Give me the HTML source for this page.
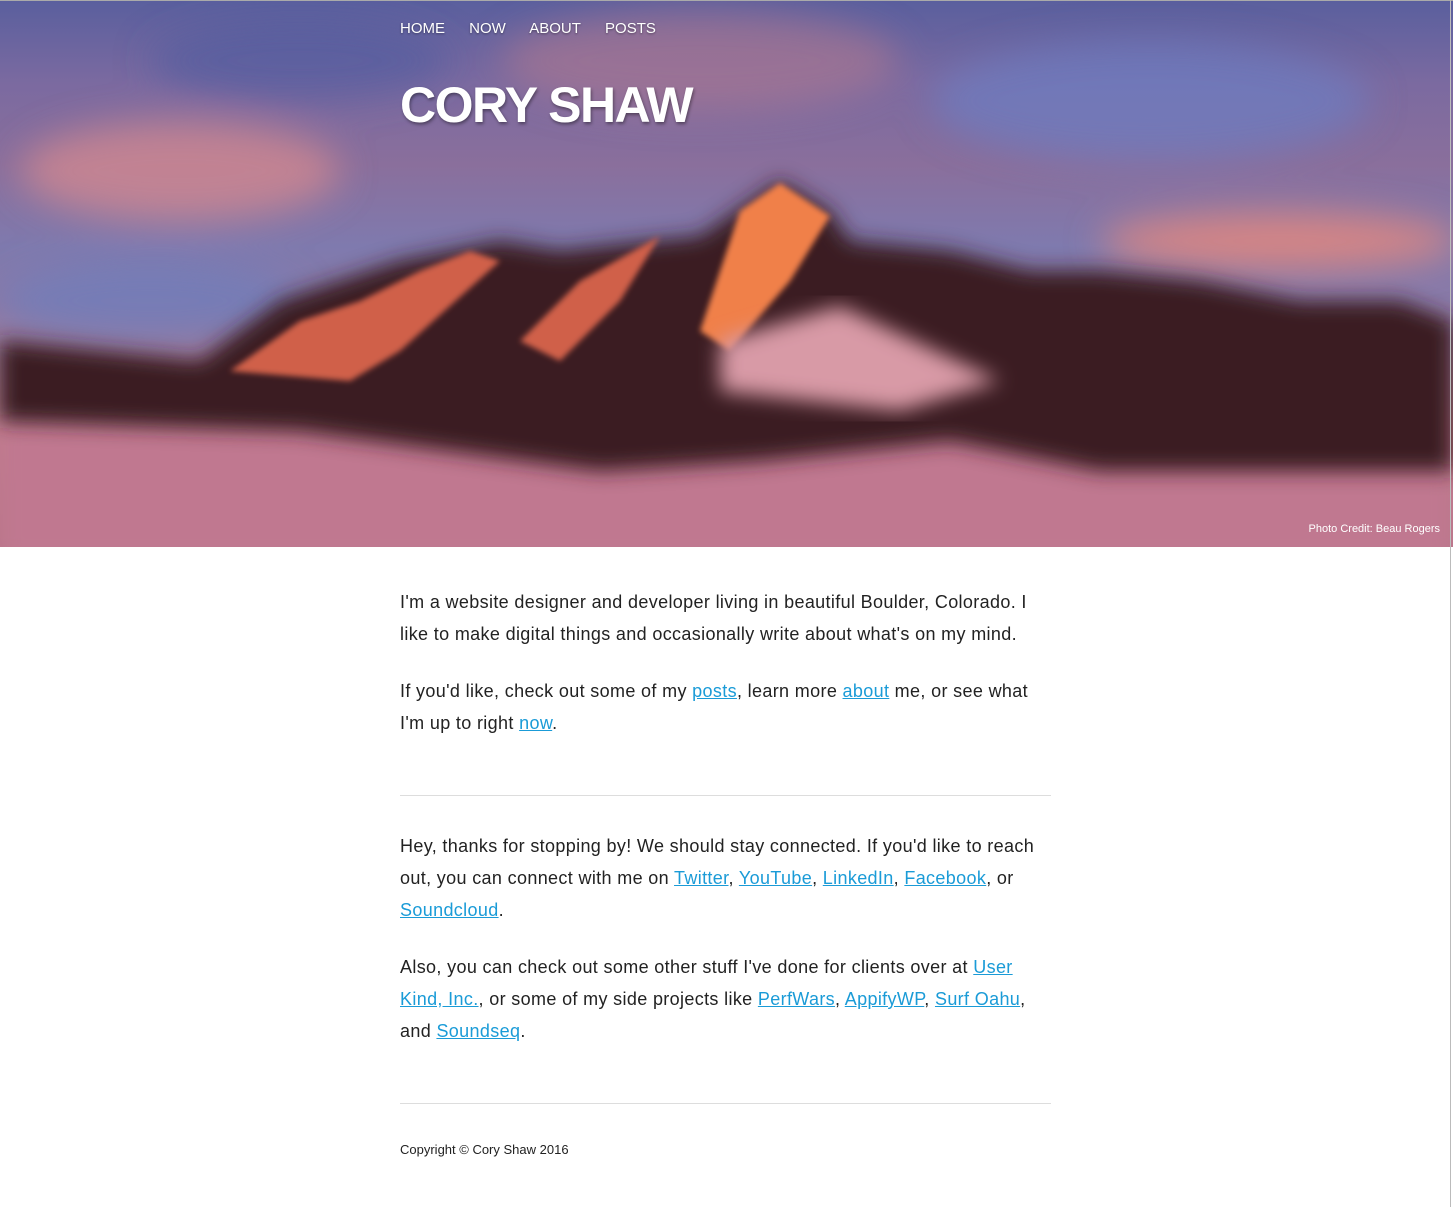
<!DOCTYPE html>
<html><head><meta charset="utf-8"><style>
body{margin:0;width:1453px;height:1207px;background:#fff;font-family:"Liberation Sans",sans-serif;overflow:hidden;position:relative}
.hero{position:absolute;left:0;top:0;width:1453px;height:547px;overflow:hidden;border-top:1px solid #aaa;box-sizing:border-box;
background:linear-gradient(180deg,#5a5f9e 0%,#7b6aa0 15%,#8a6f9c 30%,#7f7aae 45%,#8a7aa8 55%,#c07d8c 80%,#b87588 100%)}
.nav{position:absolute;top:19px;left:400px;color:#fff;font-size:15px;text-shadow:0 1px 2px rgba(0,0,0,.4)}
.nav span{margin-right:20px}
h1{position:absolute;left:400px;top:75px;margin:0;color:#fff;font-size:50px;font-weight:bold;letter-spacing:-1.5px;text-shadow:1px 2px 3px rgba(0,0,0,.4)}
.credit{position:absolute;right:13px;top:522px;color:#fff;font-size:11px}
.t{position:absolute;left:400px;font-size:18px;color:#222;line-height:32px;white-space:nowrap;letter-spacing:0.35px}
a{color:#1a9bd7;text-decoration:underline}
.hr{position:absolute;left:400px;width:651px;height:1px;background:#ddd}
</style></head><body>
<div class="hero">
<svg width="1453" height="547" style="position:absolute;left:0;top:0">
<defs><filter id="b"><feGaussianBlur stdDeviation="18"/></filter><filter id="s"><feGaussianBlur stdDeviation="3"/></filter><filter id="m"><feGaussianBlur stdDeviation="10"/></filter></defs>
<g filter="url(#b)">
<ellipse cx="180" cy="170" rx="160" ry="50" fill="#d98a8f" opacity=".7"/>
<ellipse cx="700" cy="60" rx="200" ry="50" fill="#b07890" opacity=".6"/>
<ellipse cx="1280" cy="240" rx="180" ry="30" fill="#e8887c" opacity=".8"/>
<ellipse cx="1150" cy="100" rx="220" ry="60" fill="#6a80c8" opacity=".6"/>
<ellipse cx="150" cy="300" rx="150" ry="40" fill="#6a7ec0" opacity=".6"/>
<ellipse cx="300" cy="60" rx="150" ry="40" fill="#4e5a9e" opacity=".6"/>
</g>
<rect x="0" y="420" width="1453" height="140" fill="#c07890" filter="url(#m)"/>
<polygon filter="url(#m)" points="0,340 200,360 280,300 400,260 500,240 560,250 650,240 700,235 780,180 830,210 850,240 950,250 1030,270 1100,270 1200,280 1300,300 1400,300 1453,320 1453,470 1100,470 950,440 760,460 600,470 300,430 0,420" fill="#3a1e22"/>
<polygon filter="url(#s)" points="230,370 300,320 360,300 420,270 470,250 500,260 400,350 350,380" fill="#d06048"/>
<polygon filter="url(#s)" points="520,340 580,280 660,235 620,300 560,360" fill="#d06048"/>
<polygon filter="url(#s)" points="700,330 740,210 780,182 830,215 790,280 730,350" fill="#f08048"/>
<polygon filter="url(#m)" points="720,340 840,305 1000,380 900,410 720,390" fill="#d89aa6"/>
</svg>
<div class="nav"><span>HOME</span> <span>NOW</span> <span>ABOUT</span> <span>POSTS</span></div>
<h1>CORY SHAW</h1>
<div class="credit">Photo Credit: Beau Rogers</div>
</div>
<div style="position:absolute;right:2px;top:0;width:1px;height:1207px;background:#bbb"></div>
<div class="t" style="top:586px">I'm a website designer and developer living in beautiful Boulder, Colorado. I<br>like to make digital things and occasionally write about what's on my mind.</div>
<div class="t" style="top:675px">If you'd like, check out some of my <a>posts</a>, learn more <a>about</a> me, or see what<br>I'm up to right <a>now</a>.</div>
<div class="hr" style="top:795px"></div>
<div class="t" style="top:830px">Hey, thanks for stopping by! We should stay connected. If you'd like to reach<br>out, you can connect with me on <a>Twitter</a>, <a>YouTube</a>, <a>LinkedIn</a>, <a>Facebook</a>, or<br><a>Soundcloud</a>.</div>
<div class="t" style="top:951px">Also, you can check out some other stuff I've done for clients over at <a>User</a><br><a>Kind, Inc.</a>, or some of my side projects like <a>PerfWars</a>, <a>AppifyWP</a>, <a>Surf Oahu</a>,<br>and <a>Soundseq</a>.</div>
<div class="hr" style="top:1103px"></div>
<div class="t" style="top:1134px;font-size:13px;letter-spacing:0">Copyright © Cory Shaw 2016</div>
</body></html>
